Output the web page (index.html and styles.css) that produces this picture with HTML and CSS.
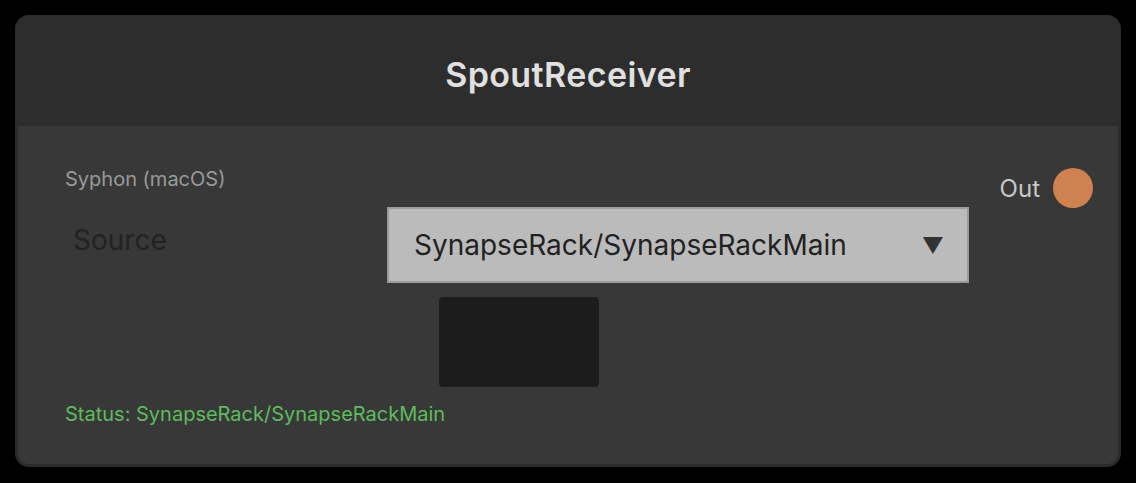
FILE: index.html
```html
<!DOCTYPE html>
<html lang="en">
<head>
  <meta charset="UTF-8">
  <title>SpoutReceiver</title>
  <link rel="stylesheet" href="styles.css">
</head>
<body>
  <div class="node">
    <div class="node-header">SpoutReceiver</div>
    <div class="node-body">
      <div class="node-main">
        <div class="sublabel">Syphon (macOS)</div>
        <div class="field">
          <span class="field-label">Source</span>
          <div class="select">
            <span>SynapseRack/SynapseRackMain</span>
            <span class="select-arrow">&#9660;</span>
          </div>
        </div>
        <div class="preview"></div>
        <div class="status">Status: SynapseRack/SynapseRackMain</div>
      </div>
      <div class="ports">
        <div class="port">
          <span>Out</span>
          <span class="port-dot"></span>
        </div>
      </div>
    </div>
  </div>
</body>
</html>
```

FILE: styles.css
```css
body {
  margin: 0;
  background-color: #000;
  font-family: Inter, 'Noto Sans', sans-serif;
}
.node {
  margin: 15px;
  width: 1100px;
  height: 446px;
  border: 3px solid #2c2c2c;
  border-radius: 14px;
  background-color: #383838;
  overflow: hidden;
  display: flex;
  flex-direction: column;
}
.node-header {
  height: 104px;
  padding-top: 4px;
  flex-shrink: 0;
  background-color: #2d2d2d;
  color: #e0e0e0;
  font-size: 34px;
  font-weight: 600;
  letter-spacing: 0.4px;
  display: flex;
  align-items: center;
  justify-content: center;
}
.node-body {
  flex: 1;
  display: flex;
  padding: 41px 25px 0 47px;
}
.node-main {
  flex: 1;
}
.sublabel {
  color: #9a9a9a;
  font-size: 20px;
  line-height: 24px;
}
.field {
  display: flex;
  align-items: center;
  margin-top: 16px;
}
.field-label {
  width: 314px;
  padding-left: 8px;
  margin-top: -10px;
  color: #222;
  font-size: 28px;
}
.select {
  width: 582px;
  height: 76px;
  box-sizing: border-box;
  border: 2px solid #9a9a9a;
  background-color: #bbb;
  color: #222;
  font-size: 28px;
  display: flex;
  align-items: center;
  justify-content: space-between;
  padding: 0 23px 0 25px;
}
.select-arrow {
  color: #333;
  font-size: 22px;
}
.preview {
  width: 160px;
  height: 90px;
  margin: 14px 0 0 374px;
  background-color: #1c1c1c;
  border-radius: 4px;
}
.status {
  margin-top: 15px;
  color: #5cbd5c;
  font-size: 20px;
  line-height: 24px;
}
.ports {
  display: flex;
  flex-direction: column;
  margin: 1px 0 0 30px;
}
.port {
  display: flex;
  align-items: center;
  gap: 13px;
  color: #c8c8c8;
  font-size: 24px;
}
.port-dot {
  width: 40px;
  height: 40px;
  border-radius: 50%;
  background-color: #cf8250;
}
```
